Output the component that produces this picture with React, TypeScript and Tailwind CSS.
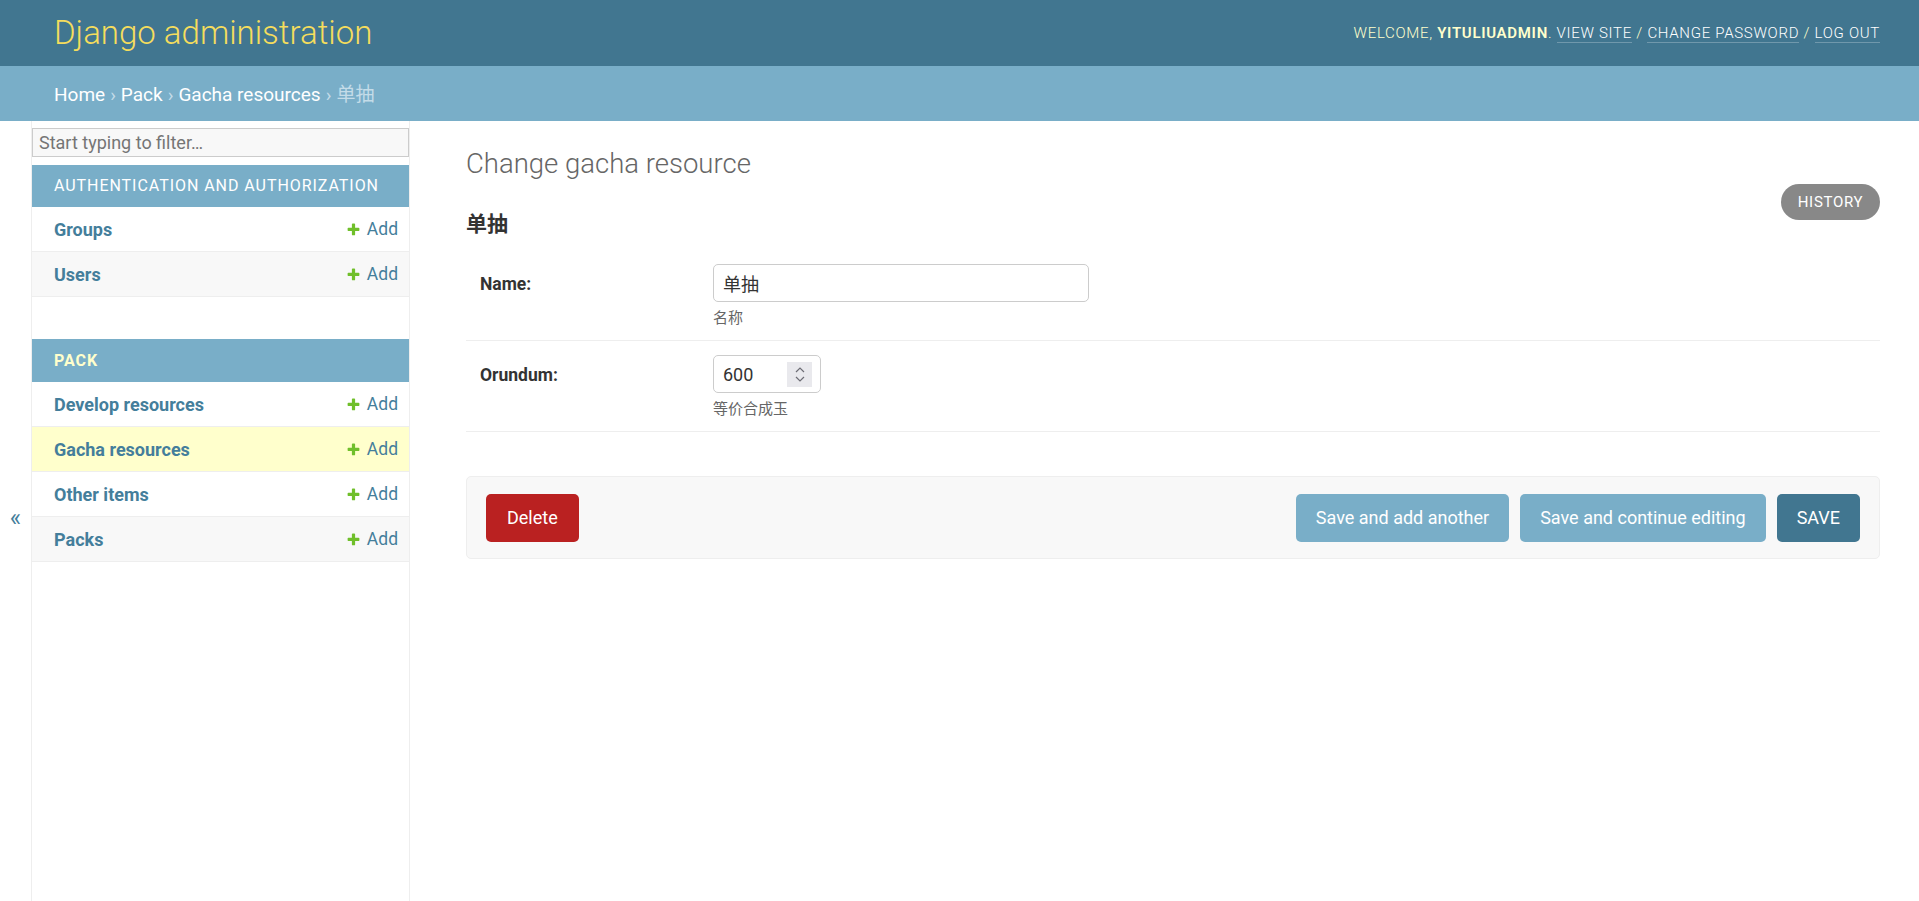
import React from 'react';

type NavItem = { name: string; bg: string };

const authItems: NavItem[] = [
  { name: 'Groups', bg: 'bg-white' },
  { name: 'Users', bg: 'bg-[#f8f8f8]' },
];

const packItems: NavItem[] = [
  { name: 'Develop resources', bg: 'bg-white' },
  { name: 'Gacha resources', bg: 'bg-[#ffc]' },
  { name: 'Other items', bg: 'bg-white' },
  { name: 'Packs', bg: 'bg-[#f8f8f8]' },
];

function PlusIcon() {
  return (
    <svg viewBox="0 0 1792 1792" className="h-[15px] w-[15px]" aria-hidden="true">
      <path
        fill="#70bf2b"
        d="M1600 796v192q0 40-28 68t-68 28h-416v416q0 40-28 68t-68 28h-192q-40 0-68-28t-28-68v-416h-416q-40 0-68-28t-28-68v-192q0-40 28-68t68-28h416v-416q0-40 28-68t68-28h192q40 0 68 28t28 68v416h416q40 0 68 28t28 68z"
      />
    </svg>
  );
}

function NavRow({ item }: { item: NavItem }) {
  return (
    <div className={`flex h-[45px] items-center justify-between border-b border-[#eee] pl-[22px] pr-[11px] ${item.bg}`}>
      <a className="text-[18px] font-bold text-[#447e9b]">{item.name}</a>
      <a className="flex items-center gap-[6px] text-[17.5px] text-[#447e9b]">
        <PlusIcon />
        Add
      </a>
    </div>
  );
}

function Header() {
  return (
    <header className="flex h-[66px] items-center justify-between bg-[#417690] pl-[54px] pr-[39px]">
      <h1 className="text-[33px] font-light leading-[40px] text-[#f5dd5d]">Django administration</h1>
      <div className="text-[15px] font-light uppercase tracking-[0.7px] text-[#ffc]">
        Welcome, <strong className="font-semibold">yituliuadmin</strong>.{' '}
        <a className="border-b border-white/25 text-white">View site</a> /{' '}
        <a className="border-b border-white/25 text-white">Change password</a> /{' '}
        <a className="border-b border-white/25 text-white">Log out</a>
      </div>
    </header>
  );
}

function Breadcrumbs() {
  return (
    <div className="flex h-[55px] items-center bg-[#79aec8] pl-[54px] pt-[3px] text-[19px] text-[#c4dce8]">
      <a className="text-white">Home</a>
      <span className="mx-[5px]">›</span>
      <a className="text-white">Pack</a>
      <span className="mx-[5px]">›</span>
      <a className="text-white">Gacha resources</a>
      <span className="mx-[5px]">›</span>
      <span>单抽</span>
    </div>
  );
}

function Sidebar() {
  return (
    <>
      <div className="flex w-[32px] shrink-0 justify-center border-r border-[#eee] pt-[385px]">
        <span className="text-[24px] leading-none text-[#447e9b]">«</span>
      </div>
      <nav className="w-[378px] shrink-0 border-r border-[#eee]">
        <input
          placeholder="Start typing to filter…"
          className="mt-[7px] mb-[8px] h-[29px] w-full border border-[#ccc] bg-[#f8f8f8] px-[6px] text-[18px] text-[#333] placeholder:text-[#757575] outline-none"
        />
        <div className="mb-[42px]">
          <div className="flex h-[42px] items-center bg-[#79aec8] pl-[22px] text-[16px] uppercase tracking-[0.95px] text-white">
            Authentication and Authorization
          </div>
          {authItems.map((item) => (
            <NavRow key={item.name} item={item} />
          ))}
        </div>
        <div>
          <div className="flex h-[43px] items-center bg-[#79aec8] pl-[22px] text-[16px] font-bold uppercase tracking-[0.95px] text-[#ffc]">
            Pack
          </div>
          {packItems.map((item) => (
            <NavRow key={item.name} item={item} />
          ))}
        </div>
      </nav>
    </>
  );
}

function FormRow({ label, help, children }: { label: string; help: string; children: React.ReactNode }) {
  return (
    <div className="flex items-start border-b border-[#eee] pt-[14px] pb-[12px] pl-[14px]">
      <label className="w-[233px] shrink-0 pt-[10px] text-[17.5px] font-bold leading-[20px] text-[#333]">{label}</label>
      <div>
        {children}
        <div className="mt-[6px] text-[15px] leading-[20px] text-[#666]">{help}</div>
      </div>
    </div>
  );
}

function Spinner() {
  return (
    <div className="flex h-[25px] w-[25px] flex-col items-center justify-center gap-[3px] bg-[#e9e9ed]">
      <svg viewBox="0 0 10 6" className="h-[6px] w-[10px]">
        <path d="M1 5 L5 1 L9 5" fill="none" stroke="#6d6d75" strokeWidth="1.2" />
      </svg>
      <svg viewBox="0 0 10 6" className="h-[6px] w-[10px]">
        <path d="M1 1 L5 5 L9 1" fill="none" stroke="#6d6d75" strokeWidth="1.2" />
      </svg>
    </div>
  );
}

function Content() {
  return (
    <main className="flex-1 pt-[27px] pl-[56px] pr-[39px]">
      <h1 className="text-[27.5px] font-light leading-[32px] text-[#666]">Change gacha resource</h1>
      <div className="mt-[4px] flex items-start justify-between">
        <h2 className="mt-[26px] text-[21px] font-bold leading-[28px] text-[#333]">单抽</h2>
        <a className="flex h-[36px] w-[99px] items-center justify-center rounded-full bg-[#888] text-[15px] uppercase tracking-[0.7px] text-white">
          History
        </a>
      </div>
      <div className="mt-[12px]">
        <FormRow label="Name:" help="名称">
          <input
            value="单抽"
            readOnly
            className="h-[38px] w-[376px] rounded-[5px] border border-[#ccc] px-[9px] text-[18px] text-[#333] outline-none"
          />
        </FormRow>
        <FormRow label="Orundum:" help="等价合成玉">
          <div className="flex h-[38px] w-[108px] items-center justify-between rounded-[5px] border border-[#ccc] pl-[9px] pr-[8px] text-[18px] text-[#333]">
            <span>600</span>
            <Spinner />
          </div>
        </FormRow>
      </div>
      <div className="mt-[44px] flex h-[83px] items-center justify-between rounded-[5px] border border-[#eee] bg-[#f8f8f8] pl-[19px] pr-[19px]">
        <a className="flex h-[48px] items-center rounded-[5px] bg-[#ba2121] px-[21px] text-[18px] text-white">Delete</a>
        <div className="flex gap-[11px]">
          <button className="h-[48px] rounded-[5px] bg-[#79aec8] px-[20px] text-[18px] text-white">Save and add another</button>
          <button className="h-[48px] rounded-[5px] bg-[#79aec8] px-[20px] text-[18px] text-white">Save and continue editing</button>
          <button className="h-[48px] rounded-[5px] bg-[#417690] px-[20px] text-[18px] text-white">SAVE</button>
        </div>
      </div>
    </main>
  );
}

export default function App() {
  return (
    <div className="flex min-h-screen flex-col bg-white font-[Roboto,'Noto_Sans_CJK_SC',sans-serif] text-[#333]">
      <Header />
      <Breadcrumbs />
      <div className="flex flex-1">
        <Sidebar />
        <Content />
      </div>
    </div>
  );
}
